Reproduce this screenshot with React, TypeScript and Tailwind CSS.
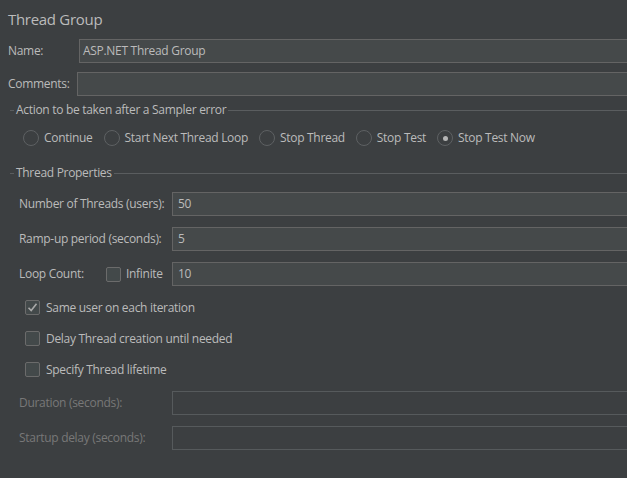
import React from 'react';

const font = { fontFamily: '"Open Sans", "Noto Sans", sans-serif' };

function Radio({ label, checked = false }: { label: string; checked?: boolean }) {
  return (
    <div className="flex items-center">
      <div className="w-[16px] h-[16px] rounded-full border border-[#5e6163] bg-[#3c3f41] flex items-center justify-center">
        {checked && <div className="w-[5px] h-[5px] rounded-full bg-[#b5b5b5]" />}
      </div>
      <span className="ml-[5px] whitespace-nowrap">{label}</span>
    </div>
  );
}

function Check({ checked = false }: { checked?: boolean }) {
  return (
    <div className="w-[15px] h-[15px] rounded-[2px] border border-[#6b6b6b] bg-[#43494a] flex items-center justify-center shrink-0">
      {checked && (
        <svg width="11" height="11" viewBox="0 0 11 11">
          <path d="M1.5 5.8 L4.2 8.6 L9.5 1.8" stroke="#a9a9a9" strokeWidth="1.6" fill="none" />
        </svg>
      )}
    </div>
  );
}

function Legend({ title }: { title: string }) {
  return (
    <div className="flex items-center h-[16px] ml-[10px]">
      <div className="w-[4px] h-px bg-[#5a5d5f]" />
      <span className="px-[2px] whitespace-nowrap">{title}</span>
      <div className="flex-1 h-px bg-[#5a5d5f]" />
    </div>
  );
}

function Field({ label, value, disabled = false }: { label: string; value?: string; disabled?: boolean }) {
  return (
    <div className="flex items-center h-[24px]">
      <span className={`w-[153px] shrink-0 whitespace-nowrap ${disabled ? 'text-[#787878]' : ''}`}>{label}</span>
      <div
        className={
          disabled
            ? 'w-[470px] shrink-0 h-[24px] border border-[#565a5c] flex items-center px-[5px]'
            : 'w-[470px] shrink-0 h-[24px] border border-[#646464] bg-[#45494a] flex items-center px-[5px]'
        }
      >
        {value}
      </div>
    </div>
  );
}

export default function App() {
  return (
    <div className="w-[627px] h-[478px] bg-[#3c3f41] text-[#bbbbbb] text-[12px] tracking-[-0.3px] overflow-hidden" style={font}>
      {/* Header */}
      <div className="pl-[8px] pt-[9px] h-[39px] text-[15px] leading-[20px]">Thread Group</div>

      <div className="flex items-center h-[24px] pl-[8px]">
        <span className="w-[71px] shrink-0">Name:</span>
        <div className="w-[560px] shrink-0 h-[24px] border border-[#646464] bg-[#45494a] flex items-center px-[3px]">
          ASP.NET Thread Group
        </div>
      </div>
      <div className="flex items-center h-[24px] pl-[8px] mt-[9px]">
        <span className="w-[69px] shrink-0">Comments:</span>
        <div className="w-[560px] shrink-0 h-[24px] border border-[#646464] bg-[#45494a]" />
      </div>

      {/* Sampler error */}
      <div className="mt-[6px]">
        <Legend title="Action to be taken after a Sampler error" />
        <div className="flex items-center gap-[11px] pl-[23px] mt-[12px] h-[16px]">
          <Radio label="Continue" />
          <Radio label="Start Next Thread Loop" />
          <Radio label="Stop Thread" />
          <Radio label="Stop Test" />
          <Radio label="Stop Test Now" checked />
        </div>
      </div>

      {/* Thread properties */}
      <div className="mt-[19px]">
        <Legend title="Thread Properties" />
        <div className="pl-[19px] mt-[11px] flex flex-col gap-[11px]">
          <Field label="Number of Threads (users):" value="50" />
          <Field label="Ramp-up period (seconds):" value="5" />
          <div className="flex items-center h-[24px]">
            <span className="w-[87px] shrink-0">Loop Count:</span>
            <Check />
            <span className="ml-[5px] w-[46px] shrink-0">Infinite</span>
            <div className="w-[470px] shrink-0 h-[24px] border border-[#646464] bg-[#45494a] flex items-center px-[5px]">10</div>
          </div>
        </div>

        <div className="pl-[25px] mt-[14px] flex flex-col gap-[16px]">
          <div className="flex items-center h-[15px]">
            <Check checked />
            <span className="ml-[6px]">Same user on each iteration</span>
          </div>
          <div className="flex items-center h-[15px]">
            <Check />
            <span className="ml-[6px]">Delay Thread creation until needed</span>
          </div>
          <div className="flex items-center h-[15px]">
            <Check />
            <span className="ml-[6px]">Specify Thread lifetime</span>
          </div>
        </div>

        <div className="pl-[19px] mt-[14px] flex flex-col gap-[11px]">
          <Field label="Duration (seconds):" disabled />
          <Field label="Startup delay (seconds):" disabled />
        </div>
      </div>
    </div>
  );
}
